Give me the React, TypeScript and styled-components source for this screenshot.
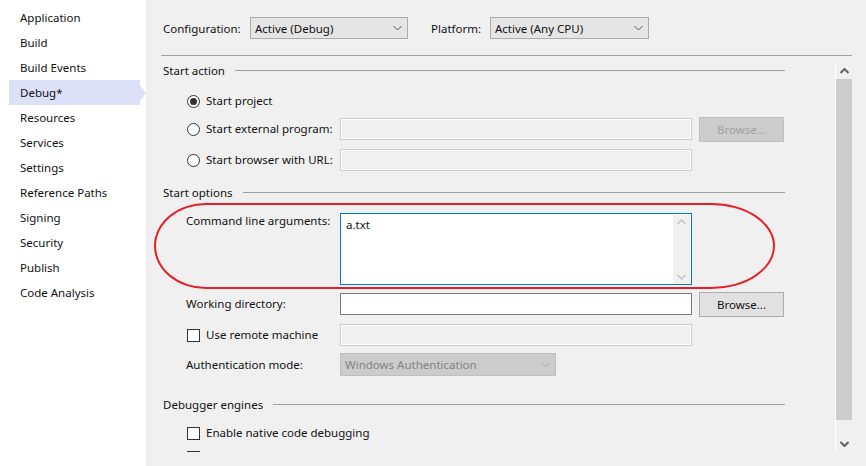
import React from 'react';
import styled, { createGlobalStyle, css } from 'styled-components';

const Global = createGlobalStyle`
  html, body { margin: 0; padding: 0; }
  body {
    font-family: "Segoe UI", "Noto Sans", "Open Sans", sans-serif;
    font-size: 11.5px;
    color: #111111;
    background: #f0f0f0;
  }
  #root { width: 866px; height: 466px; }
`;

const Page = styled.div`
  display: flex;
  width: 866px;
  height: 466px;
  overflow: hidden;
`;

const Sidebar = styled.nav`
  width: 146px;
  flex: none;
  background: #ffffff;
  padding-top: 5px;
  box-sizing: border-box;
`;

const NavItem = styled.div<{ $active?: boolean }>`
  position: relative;
  height: 25px;
  width: 131px;
  margin-left: 9px;
  padding-left: 11px;
  box-sizing: border-box;
  display: flex;
  align-items: center;
  white-space: nowrap;
  color: #111111;
  background: ${(p) => (p.$active ? '#dce1f7' : 'transparent')};
  ${(p) =>
    p.$active &&
    css`
      &::after {
        content: '';
        position: absolute;
        right: -6px;
        top: 4.5px;
        border-left: 6px solid #dce1f7;
        border-top: 8px solid transparent;
        border-bottom: 8px solid transparent;
      }
    `}
`;

const Main = styled.main`
  flex: 1;
  display: flex;
  flex-direction: column;
  background: #f0f0f0;
  min-width: 0;
`;

const TopBar = styled.div`
  display: flex;
  align-items: center;
  height: 22px;
  margin-top: 17px;
  padding-left: 17px;
`;

const TopLabel = styled.span<{ $w: number; $ml?: number }>`
  width: ${(p) => p.$w}px;
  margin-left: ${(p) => p.$ml ?? 0}px;
  flex: none;
  white-space: nowrap;
`;

const Combo = styled.div<{ $w: number; $disabled?: boolean; $h?: number }>`
  width: ${(p) => p.$w}px;
  height: ${(p) => p.$h ?? 22}px;
  box-sizing: border-box;
  display: flex;
  align-items: center;
  justify-content: space-between;
  padding: 0 5px 0 4px;
  border: 1px solid ${(p) => (p.$disabled ? '#bfbfbf' : '#acacac')};
  background: ${(p) => (p.$disabled ? '#cccccc' : '#e5e5e5')};
  color: ${(p) => (p.$disabled ? '#838383' : '#111111')};
  flex: none;
  white-space: nowrap;
`;

const Separator = styled.div`
  height: 1px;
  background: #a0a0a0;
  margin: 16px 14px 0 15px;
`;

const ScrollArea = styled.div`
  display: flex;
  height: 390px;
  margin: 6px 14px 0 0;
`;

const Content = styled.div`
  flex: 1;
  overflow: hidden;
  padding: 0 50px 0 17px;
  display: flex;
  flex-direction: column;
`;

const ScrollBar = styled.div`
  width: 16px;
  border-left: 1px solid #ffffff;
  display: flex;
  flex-direction: column;
  background: #f0f0f0;
`;

const ScrollBtn = styled.div`
  height: 17px;
  flex: none;
  display: flex;
  align-items: center;
  justify-content: center;
`;

const Thumb = styled.div`
  height: 341px;
  flex: none;
  background: #cdcdcd;
`;

const Spacer = styled.div`
  flex: 1;
`;

const Header = styled.div<{ $mt: number }>`
  display: flex;
  align-items: center;
  gap: 10px;
  height: 16px;
  flex: none;
  margin-top: ${(p) => p.$mt}px;
  white-space: nowrap;
`;

const HeaderLine = styled.div`
  flex: 1;
  height: 1px;
  background: #a0a0a0;
`;

const Row = styled.div<{ $mt: number; $h?: number; $top?: boolean }>`
  position: relative;
  display: flex;
  align-items: ${(p) => (p.$top ? 'flex-start' : 'center')};
  height: ${(p) => p.$h ?? 22}px;
  flex: none;
  margin-top: ${(p) => p.$mt}px;
  padding-left: 23px;
`;

const Label = styled.div`
  width: 154px;
  flex: none;
  display: flex;
  align-items: center;
  gap: 6px;
  white-space: nowrap;
  line-height: 16px;
`;

const Radio = styled.span<{ $checked?: boolean }>`
  width: 13px;
  height: 13px;
  margin-left: 1px;
  box-sizing: border-box;
  border: 1px solid #333333;
  border-radius: 50%;
  background: #ffffff;
  flex: none;
  display: flex;
  align-items: center;
  justify-content: center;
  &::after {
    content: '';
    width: 7px;
    height: 7px;
    border-radius: 50%;
    background: ${(p) => (p.$checked ? '#333333' : 'transparent')};
  }
`;

const Check = styled.span`
  width: 13px;
  height: 13px;
  margin-left: 1px;
  box-sizing: border-box;
  border: 1px solid #333333;
  background: #ffffff;
  flex: none;
`;

const TextBox = styled.div<{ $disabled?: boolean }>`
  width: 352px;
  height: 22px;
  box-sizing: border-box;
  flex: none;
  border: 1px solid ${(p) => (p.$disabled ? '#cccccc' : '#7a7a7a')};
  background: ${(p) => (p.$disabled ? '#f0f0f0' : '#ffffff')};
  box-shadow: ${(p) => (p.$disabled ? 'inset 0 0 0 1px #ffffff' : 'none')};
`;

const Button = styled.div<{ $disabled?: boolean }>`
  width: 85px;
  height: 25px;
  margin-left: 7px;
  box-sizing: border-box;
  flex: none;
  display: flex;
  align-items: center;
  justify-content: center;
  border: 1px solid ${(p) => (p.$disabled ? '#bfbfbf' : '#adadad')};
  background: ${(p) => (p.$disabled ? '#cccccc' : '#e1e1e1')};
  color: ${(p) => (p.$disabled ? '#a0a0a0' : '#111111')};
`;

const TextArea = styled.div`
  width: 352px;
  height: 72px;
  box-sizing: border-box;
  flex: none;
  border: 1px solid #0078d7;
  background: #ffffff;
  display: flex;
`;

const TextValue = styled.div`
  flex: 1;
  padding: 3px 5px;
  line-height: 16px;
`;

const MiniScroll = styled.div`
  width: 17px;
  margin: 1px 1px 1px 0;
  background: #f0f0f0;
  display: flex;
  flex-direction: column;
  justify-content: space-between;
  align-items: center;
  padding: 4px 0 3px;
  box-sizing: border-box;
`;

const Annotation = styled.div`
  position: absolute;
  left: -9px;
  top: -10px;
  width: 621px;
  height: 86px;
  box-sizing: border-box;
  border: 2px solid #e3202a;
  border-radius: 52px 64px 64px 52px / 43px 43px 43px 43px;
  pointer-events: none;
`;

const Chevron: React.FC<{ up?: boolean; color: string; width?: number; bold?: boolean }> = ({
  up,
  color,
  width = 1,
  bold,
}) => (
  <svg width={9} height={6} viewBox="0 0 9 6" style={{ display: 'block' }}>
    <polyline
      points={up ? '0.5,5 4.5,1 8.5,5' : '0.5,1 4.5,5 8.5,1'}
      fill="none"
      stroke={color}
      strokeWidth={bold ? 2 : width}
    />
  </svg>
);

const navItems = [
  'Application',
  'Build',
  'Build Events',
  'Debug*',
  'Resources',
  'Services',
  'Settings',
  'Reference Paths',
  'Signing',
  'Security',
  'Publish',
  'Code Analysis',
];

export default function App() {
  return (
    <>
      <Global />
      <Page>
        <Sidebar>
          {navItems.map((n) => (
            <NavItem key={n} $active={n === 'Debug*'}>
              {n}
            </NavItem>
          ))}
        </Sidebar>
        <Main>
          <TopBar>
            <TopLabel $w={87}>Configuration:</TopLabel>
            <Combo $w={158}>
              <span>Active (Debug)</span>
              <Chevron color="#5a5a5a" />
            </Combo>
            <TopLabel $w={59} $ml={23}>
              Platform:
            </TopLabel>
            <Combo $w={159}>
              <span>Active (Any CPU)</span>
              <Chevron color="#5a5a5a" />
            </Combo>
          </TopBar>
          <Separator />
          <ScrollArea>
            <Content>
              <Header $mt={0}>
                <span>Start action</span>
                <HeaderLine />
              </Header>
              <Row $mt={12}>
                <Label>
                  <Radio $checked />
                  Start project
                </Label>
              </Row>
              <Row $mt={6}>
                <Label>
                  <Radio />
                  Start external program:
                </Label>
                <TextBox $disabled />
                <Button $disabled>Browse...</Button>
              </Row>
              <Row $mt={9}>
                <Label>
                  <Radio />
                  Start browser with URL:
                </Label>
                <TextBox $disabled />
              </Row>
              <Header $mt={13}>
                <span>Start options</span>
                <HeaderLine />
              </Header>
              <Row $mt={13} $h={72} $top>
                <Label>Command line arguments:</Label>
                <TextArea>
                  <TextValue>a.txt</TextValue>
                  <MiniScroll>
                    <Chevron up color="#c2c2c2" width={1.3} />
                    <Chevron color="#c2c2c2" width={1.3} />
                  </MiniScroll>
                </TextArea>
                <Annotation />
              </Row>
              <Row $mt={8}>
                <Label>Working directory:</Label>
                <TextBox />
                <Button>Browse...</Button>
              </Row>
              <Row $mt={9}>
                <Label>
                  <Check />
                  Use remote machine
                </Label>
                <TextBox $disabled />
              </Row>
              <Row $mt={7} $h={23}>
                <Label>Authentication mode:</Label>
                <Combo $w={216} $h={23} $disabled>
                  <span>Windows Authentication</span>
                  <Chevron color="#a8a8a8" />
                </Combo>
              </Row>
              <Header $mt={20}>
                <span>Debugger engines</span>
                <HeaderLine />
              </Header>
              <Row $mt={10}>
                <Label>
                  <Check />
                  Enable native code debugging
                </Label>
              </Row>
              <Row $mt={3} $h={21}>
                <Label>
                  <Check />
                </Label>
              </Row>
            </Content>
            <ScrollBar>
              <ScrollBtn>
                <Chevron up color="#606060" bold />
              </ScrollBtn>
              <Thumb />
              <Spacer />
              <ScrollBtn>
                <Chevron color="#606060" bold />
              </ScrollBtn>
            </ScrollBar>
          </ScrollArea>
        </Main>
      </Page>
    </>
  );
}
